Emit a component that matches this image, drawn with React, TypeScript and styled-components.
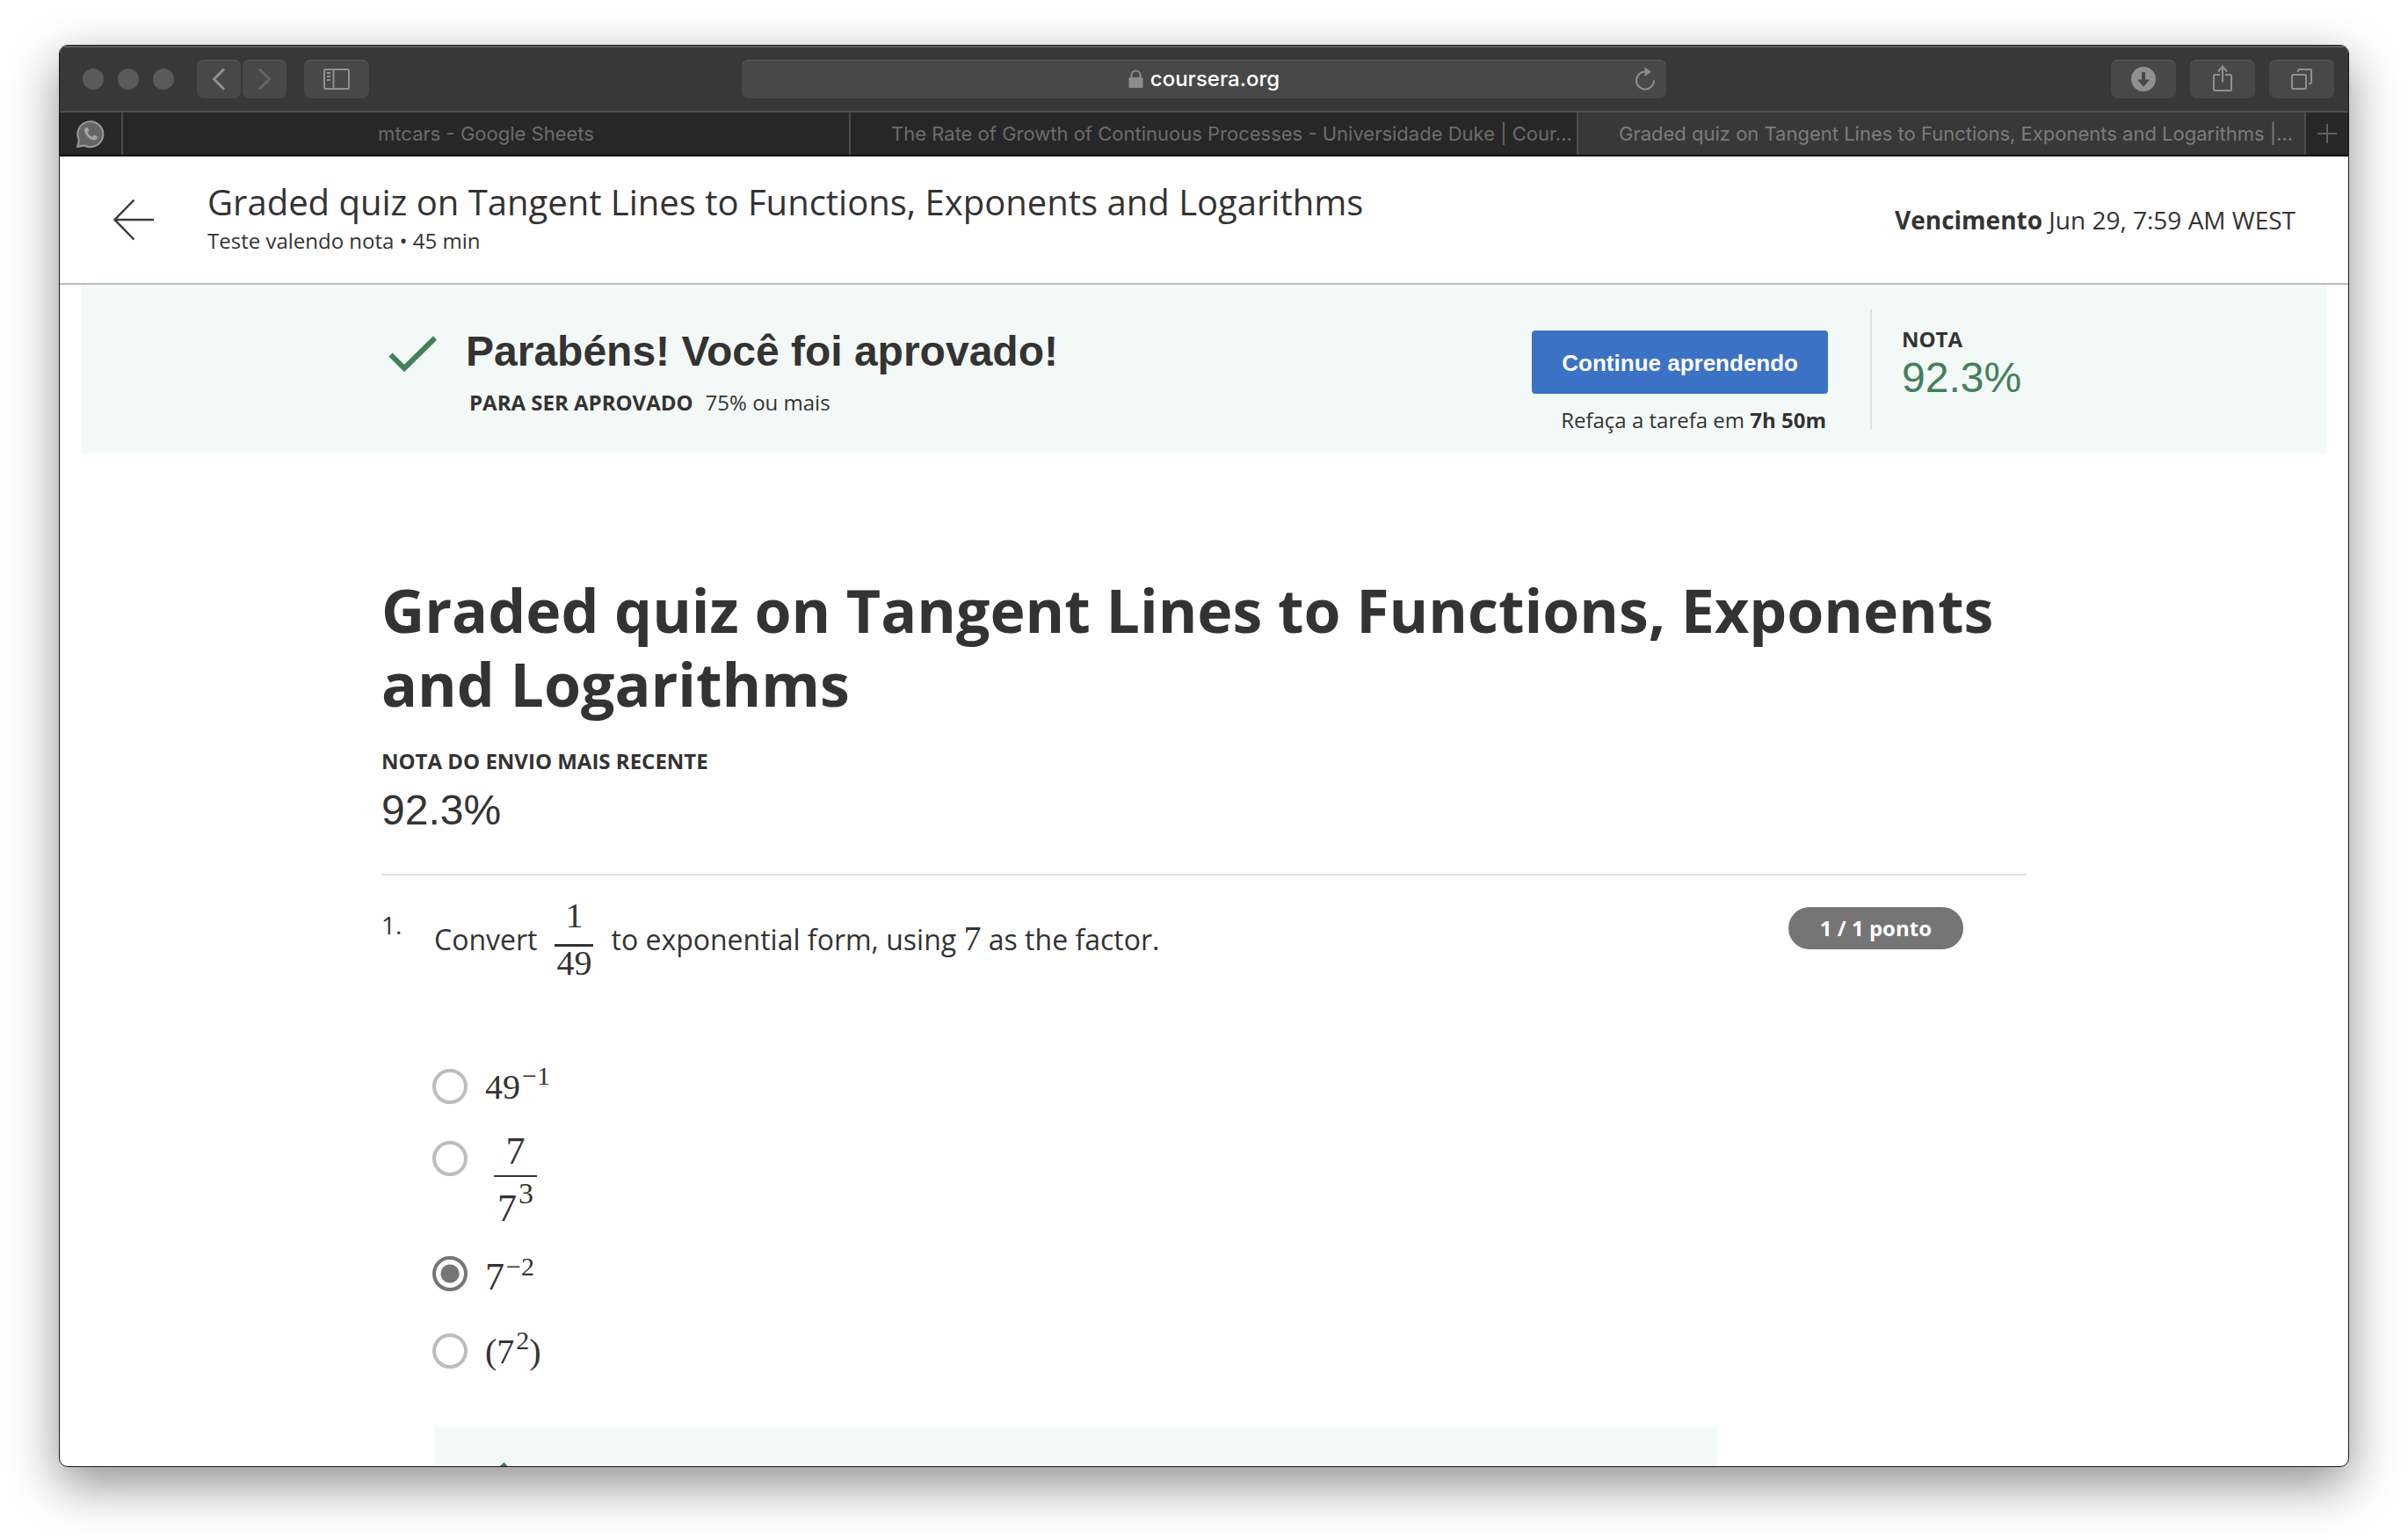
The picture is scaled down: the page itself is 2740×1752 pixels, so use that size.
import React from "react";
import styled, { createGlobalStyle } from "styled-components";

const sans = `"Open Sans", "Noto Sans", sans-serif`;
const arial = `"Liberation Sans", Arial, sans-serif`;
const system = `Inter, Roboto, sans-serif`;
const serif = `"Liberation Serif", "Times New Roman", serif`;

const ink = "#333333";
const green = "#43805b";
const mint = "#f3f9f7";

const GlobalStyle = createGlobalStyle`
  *, *::before, *::after { box-sizing: border-box; }
  body { margin: 0; background: #ffffff; color: ${ink}; font-family: ${sans}; }
  h1, h2, p { margin: 0; }
  button, input { font: inherit; color: inherit; }
  button { padding: 0; border: 0; background: none; }
  svg { display: block; flex: none; }
`;

const Desktop = styled.div`
  height: 100vh;
  padding: 51px 67px 83px;
`;

const BrowserWindow = styled.div`
  display: flex;
  flex-direction: column;
  height: 100%;
  overflow: hidden;
  border: 1px solid #1c1c1c;
  border-radius: 10px;
  background: #ffffff;
  box-shadow: 0 20px 56px rgba(0, 0, 0, 0.44);
`;

/* Browser chrome */

const Toolbar = styled.div`
  flex: none;
  display: grid;
  grid-template-columns: 1fr minmax(0, 1052px) 1fr;
  align-items: center;
  height: 76px;
  padding-top: 2px;
  border-bottom: 2px solid #505050;
  background: #383838;
  box-shadow: inset 0 2px #606060;
`;

const LeftControls = styled.div`
  display: flex;
  align-items: center;
  gap: 20px;
  padding-left: 26px;
`;

const Lights = styled.div`
  display: flex;
  gap: 16px;
  padding-right: 6px;
`;

const Light = styled.button`
  width: 24px;
  height: 24px;
  border-radius: 50%;
  background: #5a5a5a;
`;

const NavButtons = styled.div`
  display: flex;
  gap: 2px;
`;

const ToolButton = styled.button<{ $narrow?: boolean; $dim?: boolean }>`
  display: flex;
  align-items: center;
  justify-content: center;
  width: ${(p) => (p.$narrow ? 50 : 74)}px;
  height: 44px;
  border-radius: 8px;
  background: #484848;
  box-shadow: inset 0 1px #5a5a5a;
  color: ${(p) => (p.$dim ? "#666666" : "#909090")};
`;

const RightControls = styled.div`
  display: flex;
  justify-content: flex-end;
  gap: 16px;
  padding-right: 16px;
`;

const AddressBar = styled.div`
  display: grid;
  grid-template-columns: 1fr auto 1fr;
  align-items: center;
  height: 44px;
  padding: 0 12px;
  border-radius: 8px;
  background: #484848;
  box-shadow: inset 0 1px #5a5a5a;
`;

const AddressLabel = styled.label`
  grid-column: 2;
  display: flex;
  align-items: center;
  gap: 8px;
  color: #8c8c8c;
`;

const AddressInput = styled.input`
  field-sizing: content;
  padding: 0;
  border: 0;
  outline: 0;
  background: none;
  color: #ffffff;
  font-family: ${system};
  font-size: 24px;
  font-weight: 500;
  line-height: 32px;
`;

const ReloadButton = styled.button`
  justify-self: end;
  color: #8c8c8c;
`;

const TabBar = styled.div`
  flex: none;
  display: grid;
  grid-template-columns: 70px repeat(3, minmax(0, 1fr)) 50px;
  height: 50px;
  border-bottom: 2px solid #000000;
  background: #272727;
  color: #606060;
`;

const PinnedTab = styled.button`
  display: flex;
  align-items: center;
  justify-content: center;
`;

const Tab = styled.button<{ $active?: boolean; $long?: boolean }>`
  overflow: hidden;
  padding-left: ${(p) => (p.$long ? 46 : 0)}px;
  border-left: 2px solid #4c4c4c;
  background: ${(p) => (p.$active ? "#383838" : "transparent")};
  color: ${(p) => (p.$active ? "#7c7c7c" : "#6c6c6c")};
  font-family: ${system};
  font-size: 22px;
  line-height: 48px;
  text-align: ${(p) => (p.$long ? "left" : "center")};
  white-space: nowrap;
`;

const NewTab = styled.button`
  display: flex;
  align-items: center;
  justify-content: center;
  border-left: 2px solid #4c4c4c;
`;

/* Course page */

const Page = styled.div`
  flex: 1;
  min-height: 0;
  overflow-y: auto;
  scrollbar-width: none;
`;

const Header = styled.header`
  display: flex;
  align-items: center;
  height: 146px;
  padding: 0 60px;
  border-bottom: 2px solid #bcbcbc;
`;

const BackLink = styled.a`
  margin-right: 60px;
  color: #3c3a40;
`;

const HeaderText = styled.div`
  flex: 1;
`;

const HeaderTitle = styled.h2`
  font-size: 40px;
  font-weight: 400;
  line-height: 48px;
`;

const HeaderMeta = styled.p`
  font-size: 24px;
  line-height: 40px;
`;

const Due = styled.p`
  font-size: 28px;
  line-height: 40px;
`;

const Banner = styled.section`
  margin: 0 24px;
  background: ${mint};
`;

const Column = styled.div`
  width: 100%;
  max-width: 1872px;
  margin: 0 auto;
`;

const BannerRow = styled(Column)`
  display: flex;
  align-items: flex-start;
  height: 192px;
  padding-top: 28px;
`;

const BannerCheck = styled.div`
  width: 96px;
  padding: 30px 0 0 8px;
`;

const BannerText = styled.div`
  flex: 1;
  padding-top: 20px;
`;

const BannerTitle = styled.h2`
  font-family: ${arial};
  font-size: 48px;
  font-weight: 700;
  line-height: 56px;
`;

const PassRule = styled.p`
  display: flex;
  gap: 14px;
  padding: 14px 0 0 4px;
  font-size: 24px;
  line-height: 32px;
`;

const Actions = styled.div`
  padding: 24px 48px 0 0;
  text-align: right;
`;

const PrimaryButton = styled.button`
  display: block;
  height: 72px;
  padding: 2px 34px 0;
  border-radius: 4px;
  background: #3b72c6;
  color: #ffffff;
  font-family: ${arial};
  font-size: 26px;
  font-weight: 700;
`;

const Retake = styled.p`
  padding: 14px 2px 0 0;
  font-size: 24px;
  line-height: 32px;
`;

const GradeBox = styled.div`
  width: 178px;
  height: 136px;
  padding: 18px 0 0 34px;
  border-left: 2px solid #dde1e0;
`;

const Caption = styled.p`
  font-size: 24px;
  font-weight: 700;
  line-height: 32px;
`;

const Grade = styled.p<{ $passed?: boolean }>`
  font-family: ${arial};
  font-size: 48px;
  line-height: 56px;
  color: ${(p) => (p.$passed ? green : ink)};
`;

const Title = styled.h1`
  padding: 136px 0 30px;
  font-size: 68px;
  font-weight: 700;
  line-height: 84px;
`;

const Latest = styled.section`
  display: grid;
  gap: 12px;
  padding-bottom: 44px;
  border-bottom: 2px solid #e0e0e0;
`;

const Question = styled.section`
  display: grid;
  grid-template-columns: 60px 1fr auto;
  align-items: start;
  padding: 30px 72px 0 0;
`;

const QuestionNumber = styled.span`
  padding-top: 6px;
  font-size: 28px;
  line-height: 40px;
`;

const Prompt = styled.div`
  display: flex;
  align-items: center;
  gap: 20px;
  font-size: 32px;
  line-height: 44px;
`;

const Points = styled.span`
  margin-top: 6px;
  padding: 0 36px;
  border-radius: 24px;
  background: #757575;
  color: #ffffff;
  font-size: 24px;
  font-weight: 700;
  line-height: 48px;
`;

const PromptFraction = styled.span`
  display: grid;
  font-family: ${serif};
  font-size: 40px;
  line-height: 32px;
  text-align: center;
`;

const Numerator = styled.span`
  padding-bottom: 16px;
  border-bottom: 3px solid ${ink};
`;

const Denominator = styled.span`
  padding: 3px 2px 0;
`;

const InlineMath = styled.span`
  font-family: ${serif};
  font-size: 40px;
  line-height: 32px;
`;

const Options = styled.div`
  grid-column: 2 / -1;
  display: grid;
  gap: 40px;
  padding-top: 104px;
`;

const Option = styled.label`
  display: flex;
  align-items: flex-start;
  gap: 20px;
  margin-left: -2px;
`;

const Radio = styled.input`
  appearance: none;
  flex: none;
  width: 40px;
  height: 40px;
  margin: 0;
  border: 4px solid #bdbdbd;
  border-radius: 50%;

  &:checked {
    border-color: #757575;
    background: radial-gradient(circle, #757575 10px, transparent 11px);
  }
`;

const Expression = styled.span<{ $large?: boolean }>`
  font-family: ${serif};
  font-size: ${(p) => (p.$large ? 44 : 40)}px;
  line-height: ${(p) => (p.$large ? 48 : 42)}px;
`;

const Power = styled.sup<{ $large?: boolean }>`
  margin-left: 2px;
  font-size: ${(p) => (p.$large ? 34 : 30)}px;
  line-height: 0;
  vertical-align: ${(p) => (p.$large ? 20 : 16)}px;
`;

const OptionFraction = styled.span`
  display: grid;
  margin-left: 10px;
  font-family: ${serif};
  font-size: 44px;
  text-align: center;
`;

const OptionNumerator = styled.span`
  padding-bottom: 15px;
  border-bottom: 2px solid ${ink};
  line-height: 24px;
`;

const OptionDenominator = styled.span`
  padding: 19px 4px 0;
  line-height: 28px;
`;

const Feedback = styled.section`
  grid-column: 2 / -1;
  max-width: 1460px;
  margin-top: 64px;
  padding: 40px 34px;
  background: ${mint};
`;

const CheckIcon = ({ width = 56, height = 42 }: { width?: number; height?: number }) => (
  <svg width={width} height={height} viewBox="0 0 56 42" fill="none" stroke={green} strokeWidth="6" aria-hidden="true">
    <path d="M2.500 21.500 L18 37 L53 2.500" />
  </svg>
);

const line = { fill: "none", stroke: "currentColor", "aria-hidden": true } as const;

export default function App() {
  return (
    <>
      <GlobalStyle />
      <Desktop>
        <BrowserWindow>
          <Toolbar>
            <LeftControls>
              <Lights>
                <Light aria-label="Close" />
                <Light aria-label="Minimize" />
                <Light aria-label="Zoom" />
              </Lights>
              <NavButtons>
                <ToolButton $narrow aria-label="Back">
                  <svg width="16" height="26" viewBox="0 0 16 26" {...line} strokeWidth="3">
                    <path d="M14 1.500 L2.500 13 L14 24.500" />
                  </svg>
                </ToolButton>
                <ToolButton $narrow $dim aria-label="Forward">
                  <svg width="16" height="26" viewBox="0 0 16 26" {...line} strokeWidth="3">
                    <path d="M2 1.500 L13.500 13 L2 24.500" />
                  </svg>
                </ToolButton>
              </NavButtons>
              <ToolButton aria-label="Sidebar">
                <svg width="30" height="24" viewBox="0 0 30 24" {...line} strokeWidth="2">
                  <rect x="1" y="1" width="28" height="22" rx="1.500" />
                  <path d="M11.500 1 V23 M4 5 H8 M4 9 H8 M4 13 H8" />
                </svg>
              </ToolButton>
            </LeftControls>
            <AddressBar>
              <AddressLabel>
                <svg width="17" height="22" viewBox="0 0 17 22" aria-hidden="true">
                  <rect x="0.500" y="9" width="16" height="12" rx="1" fill="currentColor" />
                  <path d="M3.500 10 V6.500 A5 5 0 0 1 13.500 6.500 V10" fill="none" stroke="currentColor" strokeWidth="2" />
                </svg>
                <AddressInput aria-label="Address" defaultValue="coursera.org" size={10} />
              </AddressLabel>
              <ReloadButton aria-label="Reload">
                <svg width="24" height="28" viewBox="0 0 24 28" {...line} strokeWidth="2">
                  <path d="M13 5.500 H12 A10 10 0 1 0 22 15.500" />
                  <path d="M11.500 0.500 L19 5.800 L11.500 11 Z" fill="currentColor" stroke="none" />
                </svg>
              </ReloadButton>
            </AddressBar>
            <RightControls>
              <ToolButton aria-label="Downloads">
                <svg width="28" height="28" viewBox="0 0 28 28" aria-hidden="true">
                  <circle cx="14" cy="14" r="14" fill="currentColor" />
                  <path d="M12 6 H16 V14.500 H21 L14 22.700 L7 14.500 H12 Z" fill="#484848" />
                </svg>
              </ToolButton>
              <ToolButton aria-label="Share">
                <svg width="22" height="32" viewBox="0 0 22 32" {...line} strokeWidth="2">
                  <path d="M8 11 H2 Q1 11 1 12 V28 Q1 29 2 29 H20 Q21 29 21 28 V12 Q21 11 20 11 H14 M11 19.500 V2 M6 7.500 L11 1.500 L16 7.500" />
                </svg>
              </ToolButton>
              <ToolButton aria-label="Show all tabs">
                <svg width="24" height="24" viewBox="0 0 24 24" {...line} strokeWidth="2">
                  <rect x="1" y="7" width="16" height="16" rx="1.500" />
                  <path d="M8 4 V2 Q8 1 9 1 H22 Q23 1 23 2 V16 Q23 17 22 17 H20" />
                </svg>
              </ToolButton>
            </RightControls>
          </Toolbar>
          <TabBar>
            <PinnedTab aria-label="WhatsApp">
              <svg width="34" height="34" viewBox="0 0 34 34" aria-hidden="true">
                <path
                  d="M2 32 L4 24.500 A14.500 14.500 0 1 1 10 30.500 Z"
                  fill="#656565"
                  stroke="#9a9a9a"
                  strokeWidth="2"
                  strokeLinejoin="round"
                />
                <path
                  d="M12 10 C9.500 11 9.500 14.500 11.500 17.500 C13.500 21 17.500 24.500 21.500 24.500 C23.800 24.300 25 22.500 24.800 20.500 L21 18.500 L19 20.800 C16.500 19.800 14.800 18 13.800 15.800 L15.300 13.700 L13.800 10 Z"
                  fill="#a4a4a4"
                />
              </svg>
            </PinnedTab>
            <Tab>mtcars - Google Sheets</Tab>
            <Tab $long>The Rate of Growth of Continuous Processes - Universidade Duke | Cour...</Tab>
            <Tab $long $active>
              Graded quiz on Tangent Lines to Functions, Exponents and Logarithms |...
            </Tab>
            <NewTab aria-label="New tab">
              <svg width="22" height="22" viewBox="0 0 22 22" {...line} strokeWidth="2">
                <path d="M11 0 V22 M0 11 H22" />
              </svg>
            </NewTab>
          </TabBar>

          <Page>
            <Header>
              <BackLink href="#" aria-label="Voltar">
                <svg width="48" height="48" viewBox="0 0 48 48" {...line} strokeWidth="2.500">
                  <path d="M24.500 1.500 L2.500 24 L24.500 46.500 M2.500 24 H47" />
                </svg>
              </BackLink>
              <HeaderText>
                <HeaderTitle>Graded quiz on Tangent Lines to Functions, Exponents and Logarithms</HeaderTitle>
                <HeaderMeta>Teste valendo nota • 45 min</HeaderMeta>
              </HeaderText>
              <Due>
                <strong>Vencimento</strong> Jun 29, 7:59 AM WEST
              </Due>
            </Header>

            <Banner>
              <BannerRow>
                <BannerCheck>
                  <CheckIcon />
                </BannerCheck>
                <BannerText>
                  <BannerTitle>Parabéns! Você foi aprovado!</BannerTitle>
                  <PassRule>
                    <strong>PARA SER APROVADO</strong>
                    <span>75% ou mais</span>
                  </PassRule>
                </BannerText>
                <Actions>
                  <PrimaryButton>Continue aprendendo</PrimaryButton>
                  <Retake>
                    Refaça a tarefa em <strong>7h 50m</strong>
                  </Retake>
                </Actions>
                <GradeBox>
                  <Caption>NOTA</Caption>
                  <Grade $passed>92.3%</Grade>
                </GradeBox>
              </BannerRow>
            </Banner>

            <Column as="main">
              <Title>Graded quiz on Tangent Lines to Functions, Exponents and Logarithms</Title>
              <Latest>
                <Caption>NOTA DO ENVIO MAIS RECENTE</Caption>
                <Grade>92.3%</Grade>
              </Latest>
              <Question>
                <QuestionNumber>1.</QuestionNumber>
                <Prompt>
                  <span>Convert</span>
                  <PromptFraction>
                    <Numerator>1</Numerator>
                    <Denominator>49</Denominator>
                  </PromptFraction>
                  <span>
                    to exponential form, using <InlineMath>7</InlineMath> as the factor.
                  </span>
                </Prompt>
                <Points>1 / 1 ponto</Points>
                <Options role="radiogroup" aria-label="Convert 1/49 to exponential form">
                  <Option>
                    <Radio type="radio" name="q1" />
                    <Expression>
                      49<Power>−1</Power>
                    </Expression>
                  </Option>
                  <Option>
                    <Radio type="radio" name="q1" />
                    <OptionFraction>
                      <OptionNumerator>7</OptionNumerator>
                      <OptionDenominator>
                        7<Power $large>3</Power>
                      </OptionDenominator>
                    </OptionFraction>
                  </Option>
                  <Option>
                    <Radio type="radio" name="q1" defaultChecked />
                    <Expression $large>
                      7<Power>−2</Power>
                    </Expression>
                  </Option>
                  <Option>
                    <Radio type="radio" name="q1" />
                    <Expression>
                      (7<Power>2</Power>)
                    </Expression>
                  </Option>
                </Options>
                <Feedback aria-label="Correto">
                  <CheckIcon width={50} height={38} />
                </Feedback>
              </Question>
            </Column>
          </Page>
        </BrowserWindow>
      </Desktop>
    </>
  );
}
